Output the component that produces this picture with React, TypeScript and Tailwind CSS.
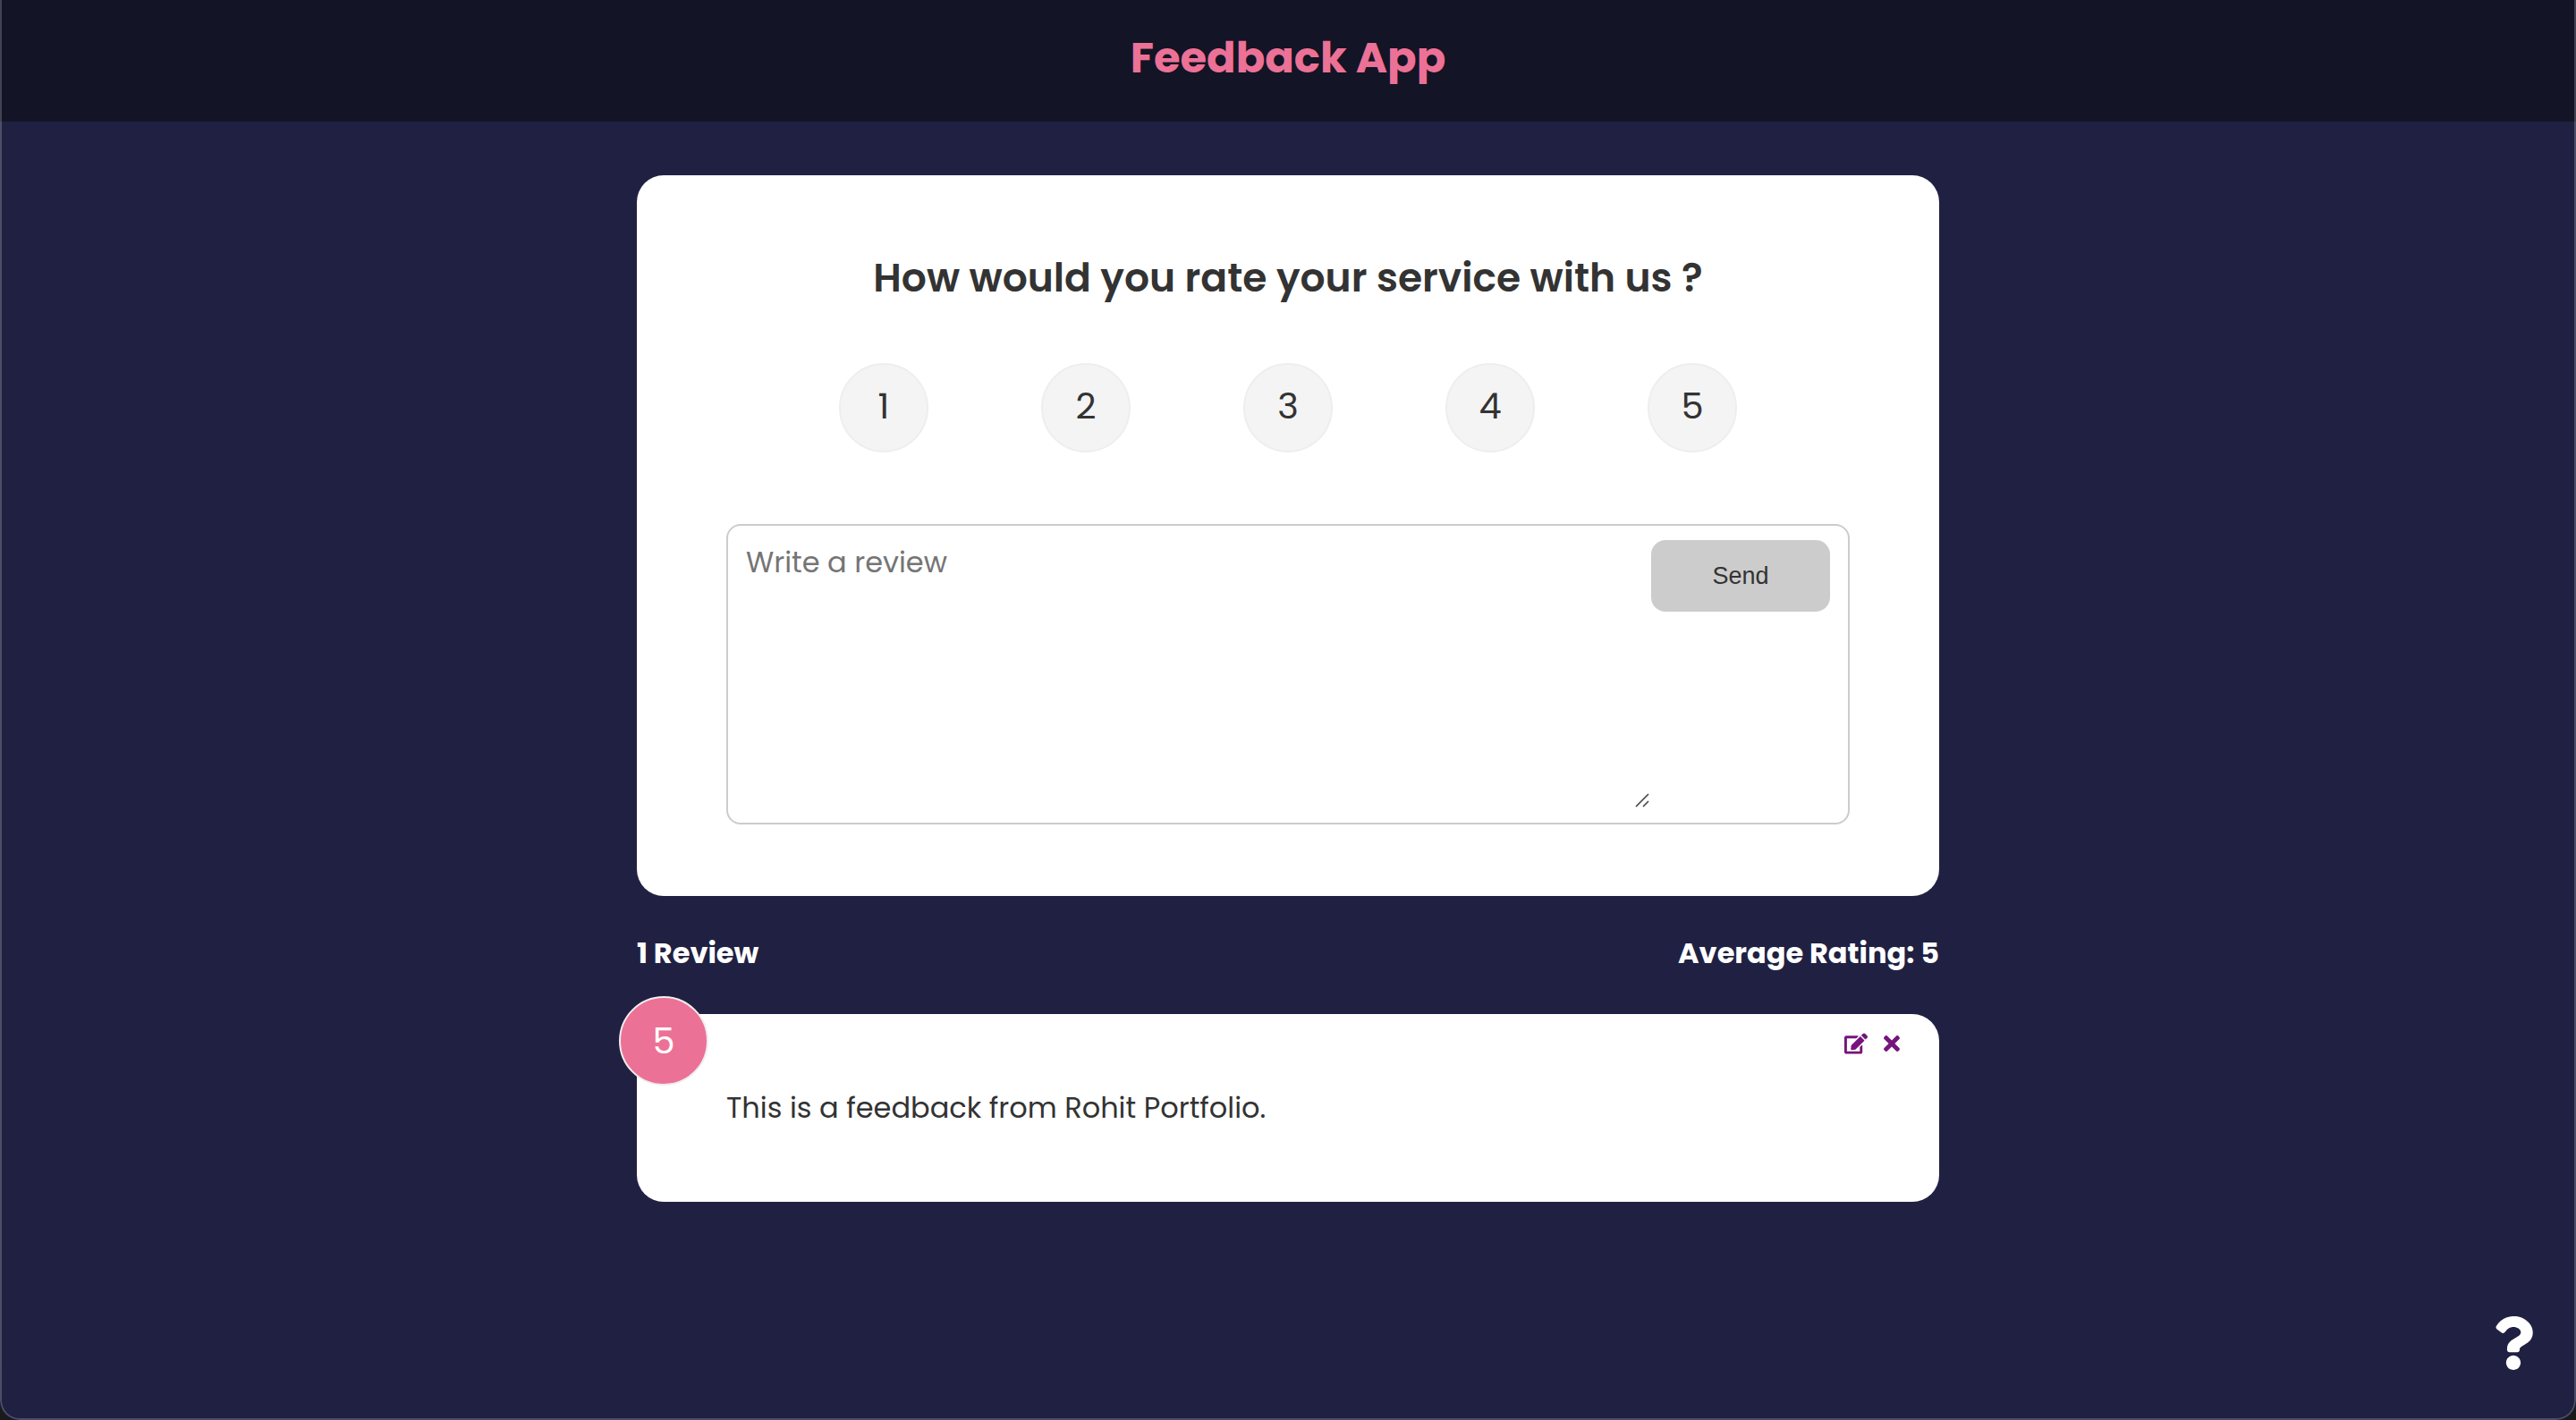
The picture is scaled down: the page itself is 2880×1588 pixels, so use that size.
import { useState } from "react";
import { FaEdit, FaQuestion, FaTimes } from "react-icons/fa";

function Card({ children }: { children: React.ReactNode }) {
  return <section className="relative rounded-[30px] bg-white px-[100px] py-[80px] text-[#333]">{children}</section>;
}

function RatingSelect({ value, onChange }: { value: number; onChange: (n: number) => void }) {
  return (
    <fieldset aria-label="Rating" className="mx-[126px] mt-[60px] flex justify-between">
      {[1, 2, 3, 4, 5].map((n) => (
        <label
          key={n}
          className="relative flex size-[100px] cursor-pointer items-center justify-center rounded-full border-2 border-[#eee] bg-[#f4f4f4] pb-1 text-[40px] has-checked:bg-[#ec7196] has-checked:text-white"
        >
          <input
            type="radio"
            name="rating"
            className="absolute inset-0 cursor-pointer opacity-0"
            checked={value === n}
            onChange={() => onChange(n)}
          />
          {n}
        </label>
      ))}
    </fieldset>
  );
}

export default function App() {
  const [rating, setRating] = useState(0);
  const [text, setText] = useState("");
  return (
    <div className="bg-[#1a1a1c]">
      <div className="relative min-h-screen overflow-hidden rounded-b-[22px] bg-[#202142] font-[Poppins,Inter,sans-serif] text-white">
        <header className="flex h-[136px] items-center justify-center bg-[#131425] pb-1.5">
          <h1 className="text-[48px] font-bold text-[#ec7196]">Feedback App</h1>
        </header>

        <main className="mx-auto mt-[60px] max-w-[1456px]">
          <Card>
            <h2 className="text-center text-[44px] leading-[70px] font-semibold">How would you rate your service with us ?</h2>
            <RatingSelect value={rating} onChange={setRating} />
            <form
              className="mt-[80px] flex rounded-2xl border-2 border-[#ccc] px-5 py-4"
              onSubmit={(e) => e.preventDefault()}
            >
              <div className="relative flex-1">
                <textarea
                  aria-label="Review"
                  placeholder="Write a review"
                  value={text}
                  onChange={(e) => setText(e.target.value)}
                  className="block h-[300px] w-full resize-none text-[32px] leading-[50px] outline-none placeholder:text-[#757575]"
                />
                <svg className="absolute right-0.5 bottom-px size-4" viewBox="0 0 16 16" stroke="#444" strokeWidth="1.6">
                  <path d="M1 15L15 1M9 15L15 9" />
                </svg>
              </div>
              <button
                type="submit"
                className="h-[80px] w-[200px] rounded-2xl bg-[#ccc] font-[Liberation_Sans,Arial,sans-serif] text-[27px]"
              >
                Send
              </button>
            </form>
          </Card>

          <div className="flex h-[132px] items-center justify-between pb-1 text-[32px] font-bold">
            <h3>1 Review</h3>
            <h3>Average Rating: 5</h3>
          </div>

          <Card>
            <div className="absolute -top-5 -left-5 flex size-[100px] items-center justify-center rounded-full border-2 border-[#eee] bg-[#ec7196] text-[40px] text-white">
              5
            </div>
            <div className="absolute top-5 right-10 flex gap-3.5 text-[26px] text-[#75147c]">
              <button type="button" aria-label="Edit review">
                <FaEdit />
              </button>
              <button type="button" aria-label="Delete review">
                <FaTimes />
              </button>
            </div>
            <p className="text-[32px] leading-[50px]">This is a feedback from Rohit Portfolio.</p>
          </Card>
        </main>

        <a href="#about" aria-label="About" className="absolute right-10 bottom-14 text-[60px]">
          <FaQuestion />
        </a>
        <div className="pointer-events-none absolute inset-0 rounded-b-[22px] border-x-2 border-b-2 border-white/20" />
      </div>
    </div>
  );
}
